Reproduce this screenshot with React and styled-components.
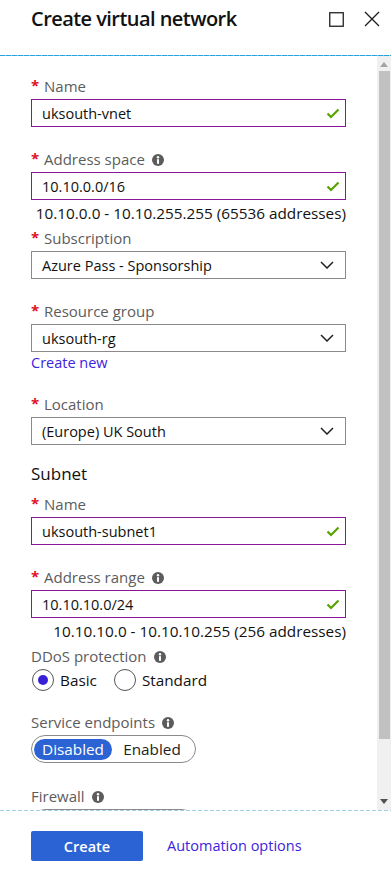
import React from "react";
import styled, { createGlobalStyle } from "styled-components";

const Global = createGlobalStyle`
  html, body { margin: 0; padding: 0; background: #fff; }
  body { font-family: "Open Sans", "Noto Sans", sans-serif; color: #1a1a1a; }
  * { box-sizing: border-box; }
`;

const Page = styled.div`
  width: 391px;
  height: 880px;
  display: flex;
  flex-direction: column;
  overflow: hidden;
  background: #fff;
`;

const Header = styled.header`
  height: 55px;
  display: flex;
  align-items: flex-start;
  padding: 4px 11px 0 31px;
`;

const Title = styled.h1`
  flex: 1;
  margin: 0;
  font-size: 20px;
  font-weight: 600;
  line-height: 30px;
  color: #111;
  letter-spacing: -0.55px;
`;

const HeaderButtons = styled.div`
  display: flex;
  gap: 20px;
  padding-top: 7px;
`;

const IconButton = styled.button`
  border: 0;
  background: none;
  padding: 0;
  width: 16px;
  height: 16px;
  display: flex;
  align-items: center;
  justify-content: center;
  cursor: pointer;
`;

const Rule = styled.div`
  height: 1px;
  flex: none;
  background: ${(p) =>
    p.$light
      ? "repeating-linear-gradient(to right, #9fd0e4 0 4px, #fff 4px 6px)"
      : "repeating-linear-gradient(to right, #2aa1d9 0 5px, #bcbcbc 5px 6px)"};
`;

const Body = styled.div`
  flex: 1;
  display: flex;
  overflow: hidden;
  min-height: 0;
`;

const Content = styled.div`
  flex: 1;
  padding: 20px 31px 0 31px;
  overflow: hidden;
`;

const Scrollbar = styled.div`
  width: 14px;
  flex: none;
  background: #f0f0f0;
  display: flex;
  flex-direction: column;
  align-items: center;
`;

const Arrow = styled.div`
  width: 0;
  height: 0;
  border-left: 4px solid transparent;
  border-right: 4px solid transparent;
  ${(p) =>
    p.$down
      ? "border-top: 5px solid #505050; margin: 6px 0 6px;"
      : "border-bottom: 5px solid #a3a3a3; margin: 6px 0 4px;"}
`;

const Thumb = styled.div`
  width: 11px;
  margin-left: 1px;
  height: 668px;
  background: #c1c1c1;
`;

const TrackSpace = styled.div`
  flex: 1;
`;

const Field = styled.div`
  margin-top: ${(p) => p.$gap ?? 22}px;
`;

const Label = styled.div`
  display: flex;
  align-items: center;
  height: 20px;
  font-size: 15px;
  line-height: 20px;
  color: #5c5c5c;
  margin-bottom: 3px;
`;

const Star = styled.span`
  color: #e0101c;
  font-weight: 700;
  font-size: 15px;
  width: 13px;
  margin-top: -3px;
`;

const InfoWrap = styled.span`
  display: inline-flex;
  margin-left: 7px;
  margin-top: 1px;
`;

const InputBox = styled.div`
  height: 28px;
  border: 1px solid ${(p) => (p.$valid ? "#881798" : "#8a8a8a")};
  display: flex;
  align-items: center;
  padding: 0 ${(p) => (p.$valid ? 5 : 11)}px 0 10px;
  font-size: 14.5px;
  color: #111;
`;

const InputText = styled.span`
  flex: 1;
`;

const Hint = styled.div`
  text-align: right;
  font-size: 15.3px;
  line-height: 20px;
  color: #111;
  margin-top: 3px;
`;

const Link = styled.a`
  display: block;
  font-size: 14.5px;
  line-height: 20px;
  color: #3b24dd;
  text-decoration: none;
  margin-top: 1px;
`;

const SectionTitle = styled.h2`
  margin: 17px 0 0;
  font-size: 17px;
  font-weight: 400;
  line-height: 24px;
  color: #111;
`;

const PlainLabel = styled.div`
  display: flex;
  align-items: center;
  font-size: 15px;
  line-height: 20px;
  color: #5c5c5c;
  margin-top: ${(p) => p.$gap ?? 22}px;
`;

const RadioRow = styled.div`
  display: flex;
  gap: 16px;
  margin-top: 2px;
  align-items: center;
`;

const RadioOption = styled.label`
  display: flex;
  align-items: center;
  gap: 6px;
  font-size: 15.3px;
  color: #111;
  line-height: 24px;
`;

const RadioCircle = styled.span`
  width: 22px;
  height: 22px;
  border-radius: 50%;
  border: 1px solid #555;
  display: flex;
  align-items: center;
  justify-content: center;
  margin-left: 1px;
  &::after {
    content: "";
    width: 10px;
    height: 10px;
    border-radius: 50%;
    background: ${(p) => (p.$checked ? "#3a1fd8" : "transparent")};
  }
`;

const Toggle = styled.div`
  margin-top: 3px;
  width: 165px;
  height: 28px;
  border: 1px solid #8a8a8a;
  border-radius: 14px;
  display: flex;
  align-items: center;
  padding: 0 2px;
`;

const ToggleOption = styled.span`
  height: 21px;
  border-radius: 11px;
  display: flex;
  align-items: center;
  justify-content: center;
  width: ${(p) => p.$w}px;
  font-size: 15.3px;
  background: ${(p) => (p.$active ? "#2b63d4" : "transparent")};
  color: ${(p) => (p.$active ? "#fff" : "#222")};
`;

const Footer = styled.footer`
  flex: none;
  height: 69px;
  display: flex;
  align-items: flex-start;
  padding: 20px 31px 0;
  gap: 24px;
`;

const PrimaryButton = styled.button`
  width: 112px;
  height: 30px;
  border: 0;
  border-radius: 2px;
  background: #2b63d4;
  color: #fff;
  font-family: inherit;
  font-size: 14.5px;
  font-weight: 600;
  cursor: pointer;
`;

const FooterLink = styled.a`
  font-size: 14.5px;
  line-height: 30px;
  color: #3b24dd;
  text-decoration: none;
`;

const Check = () => (
  <svg width="14" height="11" viewBox="0 0 14 11">
    <polyline points="1.5,5.5 5,9 12.5,1.5" fill="none" stroke="#57a300" strokeWidth="2.2" />
  </svg>
);

const Chevron = () => (
  <svg width="14" height="8" viewBox="0 0 14 8">
    <polyline points="1,1 7,7 13,1" fill="none" stroke="#222" strokeWidth="1.5" />
  </svg>
);

const Info = () => (
  <svg width="12" height="12" viewBox="0 0 12 12">
    <circle cx="6" cy="6" r="6" fill="#5c5c5c" />
    <circle cx="6" cy="3.3" r="1.2" fill="#fff" />
    <rect x="5" y="5.2" width="2" height="4.6" fill="#fff" />
  </svg>
);

const FieldLabel = ({ children, info, required = true }) => (
  <Label>
    {required && <Star>*</Star>}
    {children}
    {info && (
      <InfoWrap>
        <Info />
      </InfoWrap>
    )}
  </Label>
);

const TextField = ({ label, value, info, gap }) => (
  <Field $gap={gap}>
    <FieldLabel info={info}>{label}</FieldLabel>
    <InputBox $valid>
      <InputText>{value}</InputText>
      <Check />
    </InputBox>
  </Field>
);

const SelectField = ({ label, value, gap, children }) => (
  <Field $gap={gap}>
    <FieldLabel>{label}</FieldLabel>
    <InputBox>
      <InputText>{value}</InputText>
      <Chevron />
    </InputBox>
    {children}
  </Field>
);

export default function App() {
  return (
    <Page>
      <Global />
      <Header>
        <Title>Create virtual network</Title>
        <HeaderButtons>
          <IconButton aria-label="Maximize">
            <svg width="15" height="15" viewBox="0 0 15 15">
              <rect x="0.75" y="0.75" width="13.5" height="13.5" fill="none" stroke="#222" strokeWidth="1.3" />
            </svg>
          </IconButton>
          <IconButton aria-label="Close">
            <svg width="16" height="16" viewBox="0 0 16 16">
              <path d="M1 1 L15 15 M15 1 L1 15" stroke="#222" strokeWidth="1.4" />
            </svg>
          </IconButton>
        </HeaderButtons>
      </Header>
      <Rule />
      <Body>
        <Content>
          <TextField label="Name" value="uksouth-vnet" gap={0} />
          <TextField label="Address space" value="10.10.0.0/16" info />
          <Hint>10.10.0.0 - 10.10.255.255 (65536 addresses)</Hint>
          <SelectField label="Subscription" value="Azure Pass - Sponsorship" gap={5} />
          <SelectField label="Resource group" value="uksouth-rg">
            <Link href="#">Create new</Link>
          </SelectField>
          <SelectField label="Location" value="(Europe) UK South" gap={21} />
          <SectionTitle>Subnet</SectionTitle>
          <TextField label="Name" value="uksouth-subnet1" gap={8} />
          <TextField label="Address range" value="10.10.10.0/24" info />
          <Hint>10.10.10.0 - 10.10.10.255 (256 addresses)</Hint>
          <PlainLabel $gap={5}>
            DDoS protection
            <InfoWrap>
              <Info />
            </InfoWrap>
          </PlainLabel>
          <RadioRow>
            <RadioOption>
              <RadioCircle $checked />
              Basic
            </RadioOption>
            <RadioOption>
              <RadioCircle />
              Standard
            </RadioOption>
          </RadioRow>
          <PlainLabel $gap={20}>
            Service endpoints
            <InfoWrap>
              <Info />
            </InfoWrap>
          </PlainLabel>
          <Toggle>
            <ToggleOption $active $w={78}>Disabled</ToggleOption>
            <ToggleOption $w={80}>Enabled</ToggleOption>
          </Toggle>
          <PlainLabel $gap={23}>
            Firewall
            <InfoWrap>
              <Info />
            </InfoWrap>
          </PlainLabel>
          <Toggle aria-label="Firewall" />
        </Content>
        <Scrollbar>
          <Arrow />
          <Thumb />
          <TrackSpace />
          <Arrow $down />
        </Scrollbar>
      </Body>
      <Rule $light />
      <Footer>
        <PrimaryButton>Create</PrimaryButton>
        <FooterLink href="#">Automation options</FooterLink>
      </Footer>
    </Page>
  );
}
